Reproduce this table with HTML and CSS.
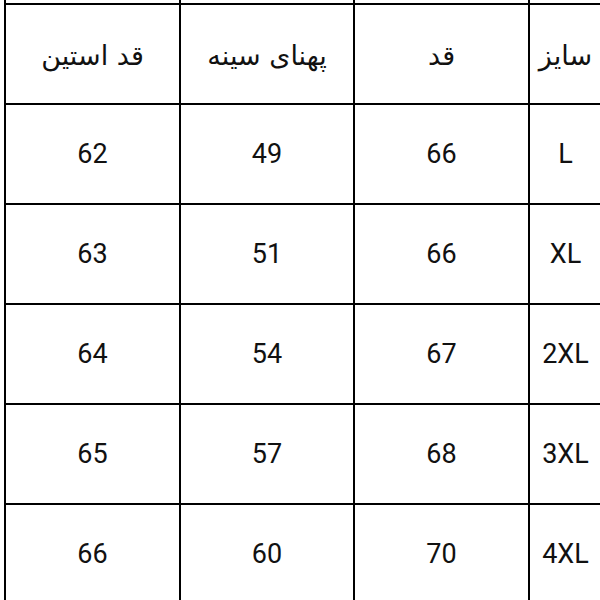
FILE: index.html
```html
<!DOCTYPE html>
<html lang="fa" dir="rtl">
<head>
<meta charset="utf-8">
<link rel="stylesheet" href="styles.css">
</head>
<body>
<table class="size-table">
  <colgroup>
    <col class="c-size">
    <col class="c-len">
    <col class="c-chest">
    <col class="c-sleeve">
  </colgroup>
  <tr class="prev-row"><td></td><td></td><td></td><td></td></tr>
  <tr class="head">
    <td>سایز</td>
    <td>قد</td>
    <td>پهنای سینه</td>
    <td>قد استین</td>
  </tr>
  <tr><td>L</td><td>66</td><td>49</td><td>62</td></tr>
  <tr><td>XL</td><td>66</td><td>51</td><td>63</td></tr>
  <tr><td>2XL</td><td>67</td><td>54</td><td>64</td></tr>
  <tr><td>3XL</td><td>68</td><td>57</td><td>65</td></tr>
  <tr><td>4XL</td><td>70</td><td>60</td><td>66</td></tr>
</table>
</body>
</html>
```

FILE: styles.css
```css
html, body {
  margin: 0;
  padding: 0;
  background: #fff;
  overflow: hidden;
  width: 600px;
  height: 600px;
}

.size-table {
  direction: rtl;
  border-collapse: collapse;
  table-layout: fixed;
  width: 599px;
  margin-top: -97px;
  margin-right: -3px;
  margin-left: 4px;
  font-family: Roboto, "DejaVu Sans", sans-serif;
  color: #111;
}

.c-size { width: 73px; }
.c-len { width: 175px; }
.c-chest { width: 174px; }
.c-sleeve { width: 175px; }

.size-table td {
  border: 2px solid #000;
  height: 98px;
  padding: 0;
  text-align: center;
  vertical-align: middle;
  font-size: 27px;
  line-height: 1;
}

.size-table .head td {
  font-family: "DejaVu Sans", sans-serif;
  font-size: 27px;
  height: 96px;
  padding-top: 2px;
}
```
